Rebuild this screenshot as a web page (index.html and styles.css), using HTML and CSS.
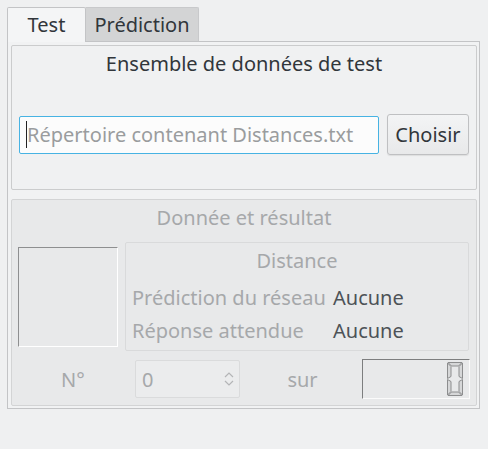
FILE: index.html
```html
<!DOCTYPE html>
<html lang="fr">
<head>
<meta charset="utf-8">
<link rel="stylesheet" href="styles.css">
</head>
<body>
<div class="window">
  <div class="tabs">
    <div class="tab tab-active">Test</div>
    <div class="tab tab-inactive">Prédiction</div>
  </div>
  <div class="pane">
    <div class="group group-main">
      <div class="group-title">Ensemble de données de test</div>
      <div class="input-row">
        <div class="line-edit"><span class="caret"></span><span class="placeholder">Répertoire contenant Distances.txt</span></div>
        <div class="button">Choisir</div>
      </div>
    </div>
    <div class="group group-disabled">
      <div class="group-title disabled-text">Donnée et résultat</div>
      <div class="result-row">
        <div class="image-frame"></div>
        <div class="distance-box">
          <div class="distance-title disabled-text">Distance</div>
          <div class="kv">
            <span class="disabled-text">Prédiction du réseau</span><span class="value">Aucune</span>
            <span class="disabled-text">Réponse attendue</span><span class="value">Aucune</span>
          </div>
        </div>
      </div>
      <div class="nav-row">
        <div class="nav-label disabled-text">N°</div>
        <div class="spin">
          <span class="spin-value">0</span>
          <svg class="spin-arrows" width="10" height="18" viewBox="0 0 10 18">
            <path d="M1 7 L5 3 L9 7" fill="none" stroke="#b4b5b7" stroke-width="1.2"/>
            <path d="M1 11 L5 15 L9 11" fill="none" stroke="#b4b5b7" stroke-width="1.2"/>
          </svg>
        </div>
        <div class="nav-label disabled-text">sur</div>
        <div class="lcd">
          <svg class="lcd-digit" width="18" height="36" viewBox="0 0 18 36">
            <g fill="#d6d7d8" stroke="#8c8d8e" stroke-width="1">
              <polygon points="2,1.5 16,1.5 12.5,5 5.5,5"/>
              <polygon points="1.5,2 5,5.5 5,15.5 1.5,17.5"/>
              <polygon points="16.5,2 13,5.5 13,15.5 16.5,17.5"/>
              <polygon points="1.5,18.5 5,20.5 5,30.5 1.5,34"/>
              <polygon points="16.5,18.5 13,20.5 13,30.5 16.5,34"/>
              <polygon points="5.5,31 12.5,31 16,34.5 2,34.5"/>
            </g>
          </svg>
        </div>
      </div>
    </div>
  </div>
</div>
</body>
</html>
```
FILE: styles.css
```css
html, body {
  margin: 0;
  padding: 0;
  background: #eff0f1;
}
body {
  font-family: "Noto Sans", "DejaVu Sans", sans-serif;
  font-size: 20px;
  color: #31363b;
  width: 488px;
  height: 449px;
  overflow: hidden;
}
.window {
  padding: 7px 8px 0 7px;
}
.tabs {
  display: flex;
  height: 34px;
}
.tab {
  box-sizing: border-box;
  height: 34px;
  display: flex;
  align-items: center;
  justify-content: center;
  line-height: 1;
}
.tab-active {
  width: 79px;
  background: #f4f5f6;
  border: 1px solid #c3c4c6;
  border-bottom: none;
  border-radius: 2px 2px 0 0;
  height: 35px;
  position: relative;
  z-index: 1;
  padding-bottom: 1px;
}
.tab-inactive {
  width: 113px;
  background: #d3d4d5;
  border: 1px solid #c8c9cb;
  border-left: none;
  border-bottom: none;
  border-radius: 0 2px 0 0;
}
.pane {
  box-sizing: border-box;
  width: 473px;
  height: 368px;
  border: 1px solid #c3c4c6;
  background: #f1f2f3;
  padding: 3px 2px 2px 3px;
  display: flex;
  flex-direction: column;
  gap: 9px;
}
.group {
  box-sizing: border-box;
  border: 1px solid #cbcccd;
  border-radius: 2px;
  flex-shrink: 0;
}
.group-main {
  height: 145px;
  background: #f0f1f2;
  padding: 0 7px 0 7px;
}
.group-title {
  text-align: center;
  line-height: 26px;
  padding-top: 5px;
}
.input-row {
  display: flex;
  gap: 8px;
  margin-top: 37px;
  align-items: center;
}
.line-edit {
  box-sizing: border-box;
  width: 360px;
  height: 38px;
  border: 1px solid #47b3e3;
  border-radius: 2px;
  background: #fcfcfc;
  display: flex;
  align-items: center;
  padding-left: 6px;
}
.caret {
  width: 1px;
  height: 27px;
  background: #222;
  margin-right: -1px;
}
.placeholder {
  color: #9a9c9e;
  padding-left: 1px;
  white-space: nowrap;
}
.button {
  box-sizing: border-box;
  width: 82px;
  height: 41px;
  border: 1px solid #bfc0c2;
  border-radius: 3px;
  background: linear-gradient(#f3f4f5, #e8e9ea);
  box-shadow: 0 1px 1px rgba(0,0,0,0.08);
  display: flex;
  align-items: center;
  justify-content: center;
}
.group-disabled {
  height: 207px;
  background: #e8e9ea;
  border-color: #d3d4d5;
  padding: 0 6px;
}
.disabled-text {
  color: #a6a8aa;
}
.result-row {
  display: flex;
  align-items: center;
  gap: 7px;
  margin-top: 11px;
}
.image-frame {
  box-sizing: border-box;
  width: 100px;
  height: 100px;
  border-top: 1px solid #8e8f90;
  border-left: 1px solid #8e8f90;
  border-right: 1px solid #ffffff;
  border-bottom: 1px solid #ffffff;
}
.distance-box {
  box-sizing: border-box;
  width: 344px;
  height: 109px;
  border: 1px solid #d9dadb;
  border-radius: 2px;
  padding: 5px 6px 0 6px;
}
.distance-title {
  text-align: center;
  line-height: 26px;
}
.kv {
  display: grid;
  grid-template-columns: 201px 1fr;
  row-gap: 7px;
  margin-top: 11px;
  line-height: 26px;
  white-space: nowrap;
}
.value {
  color: #4d5257;
}
.nav-row {
  display: grid;
  grid-template-columns: 107px 107px 106px 108px;
  column-gap: 8px;
  align-items: center;
  margin-top: 8px;
}
.nav-label {
  text-align: center;
  padding-left: 3px;
}
.spin {
  box-sizing: border-box;
  height: 38px;
  border: 1px solid #dadbdc;
  border-radius: 2px;
  background: #ebeced;
  display: flex;
  align-items: center;
  justify-content: space-between;
  padding: 0 5px 0 6px;
  margin-left: 2px;
}
.spin-value {
  color: #a6a8aa;
}
.lcd {
  box-sizing: border-box;
  height: 40px;
  border-top: 1px solid #7d7e7f;
  border-left: 1px solid #7d7e7f;
  border-right: 1px solid #fbfbfb;
  border-bottom: 1px solid #fbfbfb;
  display: flex;
  align-items: center;
  justify-content: flex-end;
  padding-right: 5px;
}
.lcd-digit {
  display: block;
}
```
